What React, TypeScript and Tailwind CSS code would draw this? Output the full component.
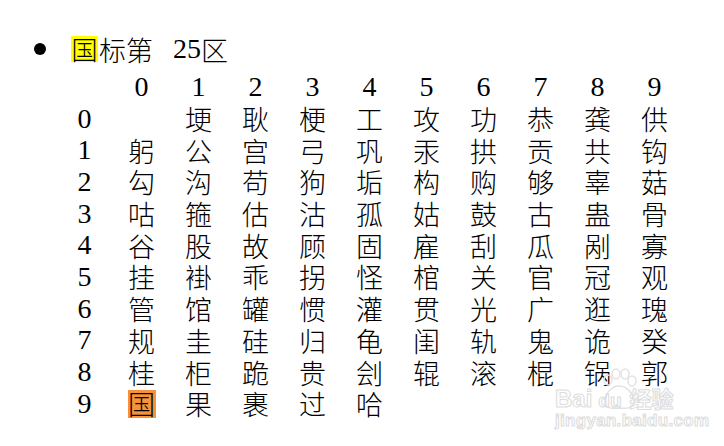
const rows: string[][] = [
  ["", "埂", "耿", "梗", "工", "攻", "功", "恭", "龚", "供"],
  ["躬", "公", "宫", "弓", "巩", "汞", "拱", "贡", "共", "钩"],
  ["勾", "沟", "苟", "狗", "垢", "构", "购", "够", "辜", "菇"],
  ["咕", "箍", "估", "沽", "孤", "姑", "鼓", "古", "蛊", "骨"],
  ["谷", "股", "故", "顾", "固", "雇", "刮", "瓜", "剐", "寡"],
  ["挂", "褂", "乖", "拐", "怪", "棺", "关", "官", "冠", "观"],
  ["管", "馆", "罐", "惯", "灌", "贯", "光", "广", "逛", "瑰"],
  ["规", "圭", "硅", "归", "龟", "闺", "轨", "鬼", "诡", "癸"],
  ["桂", "柜", "跪", "贵", "刽", "辊", "滚", "棍", "锅", "郭"],
  ["国", "果", "裹", "过", "哈", "", "", "", "", ""],
];

const serif = "font-['Liberation_Serif',serif]";
const cjk = "font-['Noto_Sans_CJK_SC',sans-serif] font-light";

function Watermark() {
  return (
    <div className="absolute left-[553px] top-[368px] w-[140px] h-[64px] pointer-events-none">
      <svg className="absolute left-[46px] top-0" width="40" height="42" viewBox="0 0 40 42">
        <g fill="none" stroke="#e2e2e2" strokeWidth="1.5">
          <ellipse cx="9" cy="12" rx="4" ry="5" />
          <ellipse cx="17" cy="6" rx="4" ry="5" />
          <ellipse cx="26" cy="6" rx="4" ry="5" />
          <ellipse cx="33" cy="13" rx="4" ry="5" />
          <path d="M6 34 C6 24 14 18 20 18 C27 18 35 25 35 34 C35 40 28 41 20 40 C12 41 6 40 6 34Z" />
        </g>
      </svg>
      <div className="absolute left-[2px] top-[18px] flex items-baseline font-['Liberation_Sans',sans-serif] font-bold text-[24px] leading-none text-transparent [-webkit-text-stroke:1px_#dcdcdc]">
        <span>Bai</span>
        <span className="ml-[6px] text-[19px]">du</span>
        <span className="ml-[8px] font-['Noto_Sans_CJK_SC',sans-serif] text-[22px]">经验</span>
      </div>
      <div className="absolute left-[2px] top-[44px] font-['Liberation_Sans',sans-serif] font-bold text-[17px] leading-none text-transparent [-webkit-text-stroke:1px_#dcdcdc] tracking-[0.3px]">
        jingyan.baidu.com
      </div>
    </div>
  );
}

export default function App() {
  return (
    <div className="relative w-[724px] h-[446px] bg-white text-black pt-[36px] overflow-hidden">
      <div className="flex items-center h-[26px]">
        <div className="ml-[34px] w-[12px] h-[12px] rounded-full bg-black" />
        <div className="ml-[25px] flex items-center h-[26px] text-[27px] leading-none">
          <span className={`${cjk} bg-[#ffff00] h-[26px] w-[27px] flex items-center justify-center text-[26px]`}>国</span>
          <span className={`${cjk} ml-[1px]`}>标第</span>
          <span className={`${serif} ml-[20px] text-[28px]`}>25</span>
          <span className={`${cjk}`}>区</span>
        </div>
      </div>
      <div className="ml-[56px] mt-[9px] grid grid-cols-[repeat(11,57px)] auto-rows-[31.7px]">
        <div />
        {Array.from({ length: 10 }, (_, i) => (
          <div key={i} className={`${serif} text-[28px] flex items-center justify-center leading-none`}>
            {i}
          </div>
        ))}
        {rows.map((r, ri) => (
          <>
            <div key={`l${ri}`} className={`${serif} text-[28px] flex items-center justify-center leading-none`}>
              {ri}
            </div>
            {r.map((c, ci) => (
              <div key={`${ri}-${ci}`} className="flex items-center justify-center">
                <span
                  className={`${cjk} text-[27px] leading-none flex items-center justify-center ${
                    ri === 9 && ci === 0 ? "bg-[#f7923a] w-[28px] h-[28px]" : ""
                  }`}
                >
                  {c}
                </span>
              </div>
            ))}
          </>
        ))}
      </div>
      <Watermark />
    </div>
  );
}
